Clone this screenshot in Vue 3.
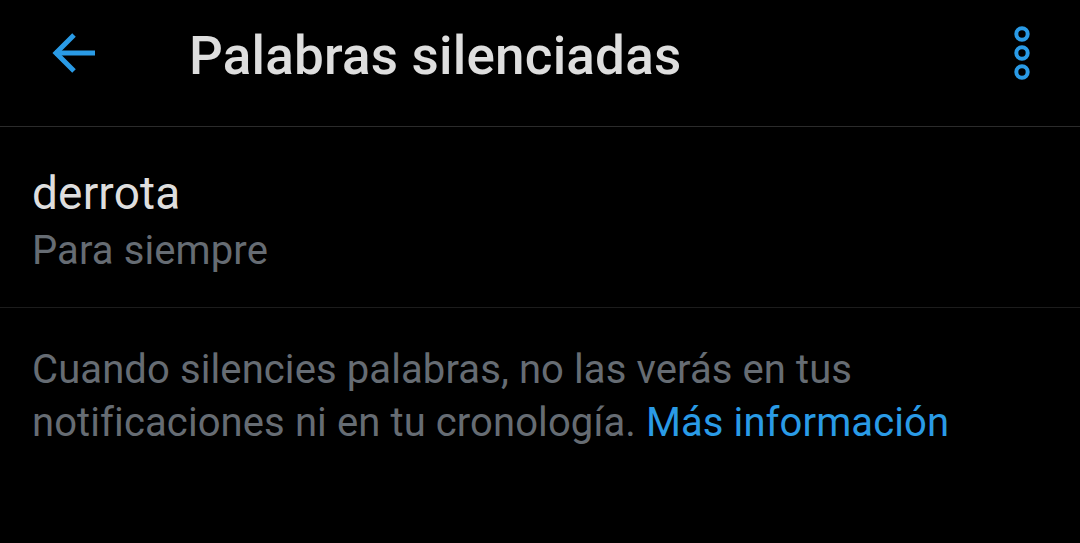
<script setup>
const mutedWord = { word: 'derrota', duration: 'Para siempre' }
</script>

<template>
  <div class="screen">
    <header class="toolbar">
      <button class="icon-btn back">
        <svg width="46" height="44" viewBox="0 0 46 44" fill="none" stroke="#2a9be6" stroke-width="5" stroke-linejoin="miter">
          <path d="M4 22H44" />
          <path d="M23 4L5 22L23 40" />
        </svg>
      </button>
      <h1 class="title">Palabras silenciadas</h1>
      <button class="icon-btn more">
        <svg width="18" height="56" viewBox="0 0 18 56" fill="none" stroke="#2a9be6" stroke-width="4">
          <circle cx="9" cy="9" r="5.7" />
          <circle cx="9" cy="28" r="5.7" />
          <circle cx="9" cy="47" r="5.7" />
        </svg>
      </button>
    </header>
    <section class="word-row">
      <div class="word">{{ mutedWord.word }}</div>
      <div class="duration">{{ mutedWord.duration }}</div>
    </section>
    <p class="hint">
      Cuando silencies palabras, no las verás en tus<br />notificaciones ni en tu cronología.
      <a class="link">Más información</a>
    </p>
  </div>
</template>

<style scoped>
.screen {
  width: 1080px;
  height: 543px;
  background: #000;
  font-family: Roboto, "Liberation Sans", sans-serif;
  overflow: hidden;
}

.toolbar {
  height: 106px;
  display: flex;
  align-items: center;
  border-bottom: 1px solid #2b2b2b;
  padding: 0 49px 20px 51px;
}

.icon-btn {
  display: flex;
  padding: 0;
  background: none;
  border: none;
}

.title {
  margin: 0 0 0 92px;
  flex: 1;
  font-size: 53px;
  line-height: 62px;
  font-weight: 500;
  letter-spacing: 0.2px;
  padding-top: 6px;
  color: #dedede;
}

.word-row {
  height: 181px;
  box-sizing: border-box;
  padding: 40px 32px 0;
  border-bottom: 1px solid #1c1c1c;
}

.word {
  font-size: 46px;
  line-height: 52px;
  letter-spacing: 0.15px;
  color: #dedede;
}

.duration {
  font-size: 40px;
  line-height: 48px;
  letter-spacing: 0.1px;
  margin-top: 8px;
  color: #666c73;
}

.hint {
  margin: 36px 32px 0;
  font-size: 40px;
  line-height: 52.5px;
  letter-spacing: 0.1px;
  color: #666c73;
}

.link {
  color: #2a9be6;
}
</style>
